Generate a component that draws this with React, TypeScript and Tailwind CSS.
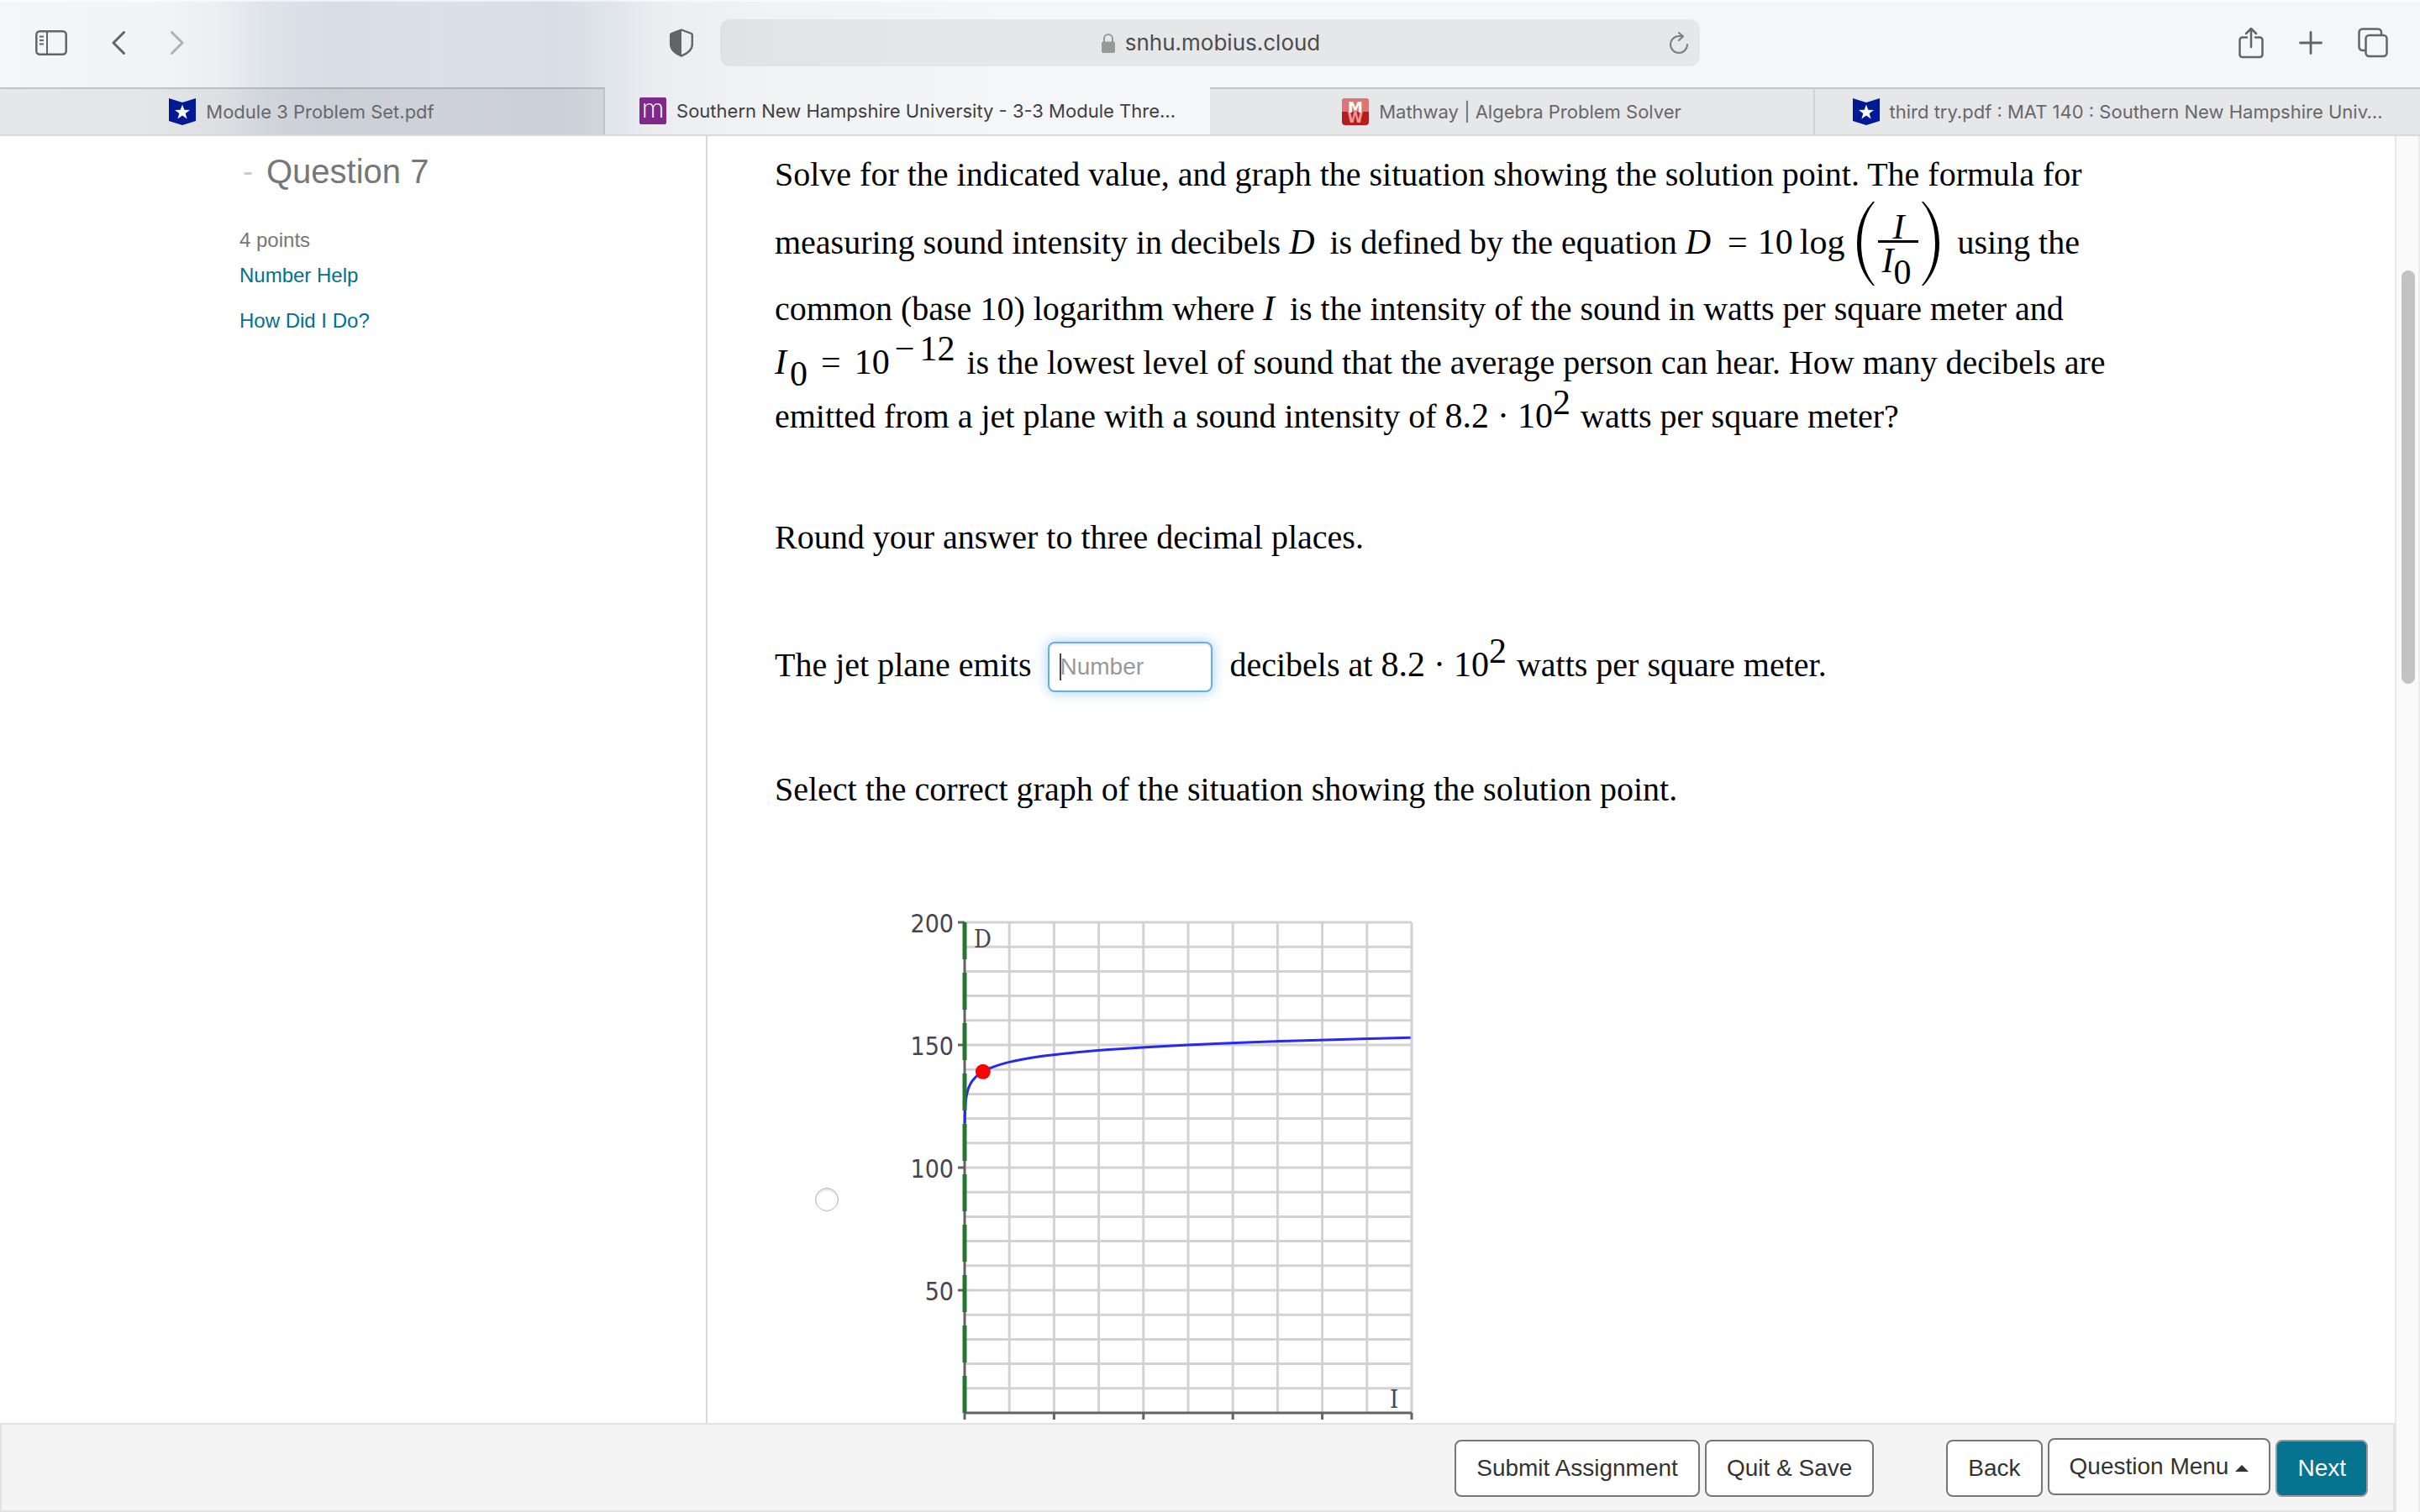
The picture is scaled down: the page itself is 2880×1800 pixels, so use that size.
import type { ReactNode } from "react"

const CHART = { x: 78, y: 18, width: 532, height: 584, cols: 10, rows: 20, maxI: 2000, maxD: 200 }

const tabs = [
  { title: "Module 3 Problem Set.pdf", icon: "star", active: false },
  { title: "Southern New Hampshire University - 3-3 Module Thre…", icon: "mobius", active: true },
  { title: "Mathway | Algebra Problem Solver", icon: "mathway", active: false },
  { title: "third try.pdf : MAT 140 : Southern New Hampshire Univ…", icon: "star", active: false },
]

function Favicon({ name }: { name: string }) {
  if (name === "star") {
    return (
      <svg className="size-8 shrink-0" viewBox="0 0 32 32" aria-hidden="true">
        <path d="M0 0L16 5L32 0V27L16 32L0 27Z" fill="#001a96" />
        <path d="M16 7.5l2.3 6.2 6.7.2-5.300 4.100 1.900 6.400L16 20.600l-5.600 3.800 1.900-6.400L7 13.900l6.700-.2z" fill="#fff" />
      </svg>
    )
  }
  if (name === "mobius") {
    return (
      <svg className="size-8 shrink-0 overflow-visible" viewBox="0 0 32 32" aria-hidden="true">
        <rect width="32" height="32" rx="2" fill="#7f2a8b" />
        <text x="16" y="24" textAnchor="middle" fontFamily="Lato" fontWeight="300" fontSize="33" fill="#fff">m</text>
      </svg>
    )
  }
  return (
    <svg className="size-8 shrink-0 overflow-visible" viewBox="0 0 32 32" aria-hidden="true">
      <rect width="32" height="32" rx="4" fill="#b91a1a" />
      <path d="M4 0H28A4 4 0 0 1 32 4V16H0V4A4 4 0 0 1 4 0Z" fill="#dc7676" />
      <text x="16" y="29" textAnchor="middle" fontFamily="DejaVu Sans" fontWeight="700" fontSize="17" fill="#e99a9a">W</text>
      <text x="16" y="17" textAnchor="middle" fontFamily="DejaVu Sans" fontWeight="700" fontSize="18" fill="#fff">M</text>
    </svg>
  )
}

function Toolbar() {
  return (
    <div className="grid h-[104px] grid-cols-[1fr_1166px_1fr] items-center border-t-2 border-white/60 pb-1">
      <div className="flex items-center pr-8 pl-[42px] text-[#636467]">
        <button aria-label="Show sidebar">
          <svg className="h-[30px] w-[38px]" viewBox="0 0 38 30" fill="none" stroke="currentColor" strokeWidth="2.500">
            <rect x="1.300" y="1.300" width="35.400" height="27.400" rx="4" />
            <path d="M14 1v28M5 7.500h5M5 12h5M5 16.500h5" strokeWidth="2" />
          </svg>
        </button>
        <button aria-label="Back" className="ml-[53px]">
          <svg className="h-7 w-4" viewBox="0 0 16 28" fill="none" stroke="currentColor" strokeWidth="3" strokeLinecap="round" strokeLinejoin="round">
            <path d="M14.500 1.500L2 14l12.500 12.500" />
          </svg>
        </button>
        <button aria-label="Forward" className="ml-[54px] text-[#b0b1b4]">
          <svg className="h-7 w-4" viewBox="0 0 16 28" fill="none" stroke="currentColor" strokeWidth="3" strokeLinecap="round" strokeLinejoin="round">
            <path d="M1.500 1.500L14 14L1.500 26.500" />
          </svg>
        </button>
        <button aria-label="Privacy report" className="ml-auto">
          <svg className="h-[34px] w-7" viewBox="0 0 28 34">
            <path d="M14 1.500L26 6q.8.300.8 1.500V19c0 6-6 11-12.800 13.500C7.200 30 1.200 25 1.200 19V7.500Q1.200 6.300 2 6Z" fill="none" stroke="currentColor" strokeWidth="2.400" />
            <path d="M14 1.500L2 6q-.8.300-.8 1.500V19c0 6 6 11 12.800 13.500Z" fill="currentColor" />
          </svg>
        </button>
      </div>

      <div className="flex h-14 items-center rounded-xl bg-black/6 px-3.5">
        <div className="flex flex-1 items-center justify-center gap-3 pl-6">
          <svg className="h-[23px] w-4" viewBox="0 0 16 23" fill="#979898" aria-hidden="true">
            <rect y="9.500" width="16" height="13.500" rx="2" />
            <path d="M3 10V6a5 5 0 0 1 10 0v4" fill="none" stroke="#979898" strokeWidth="2" />
          </svg>
          <span className="text-[26px] leading-8 text-[#4b4c4e]">snhu.mobius.cloud</span>
        </div>
        <button aria-label="Reload" className="text-[#7b7c7e]">
          <svg className="h-[26px] w-[22px]" viewBox="0 0 22 26" fill="none" stroke="currentColor" strokeWidth="2" strokeLinecap="round" strokeLinejoin="round">
            <path d="M21 15a10 10 0 1 1-10-10h4M11 1l5 4.200L11 10" />
          </svg>
        </button>
      </div>

      <div className="flex items-center justify-end gap-[42px] pr-[38px] text-[#636467]">
        <button aria-label="Share">
          <svg className="h-[38px] w-[30px]" viewBox="0 0 30 38" fill="none" stroke="currentColor" strokeWidth="2.500" strokeLinecap="round" strokeLinejoin="round">
            <path d="M10 12.500H4.500A3 3 0 0 0 1.500 15.500V33a3 3 0 0 0 3 3h21a3 3 0 0 0 3-3V15.500a3 3 0 0 0-3-3H20M15 24V2M9 8l6-6 6 6" />
          </svg>
        </button>
        <button aria-label="New tab">
          <svg className="size-7" viewBox="0 0 28 28" stroke="currentColor" strokeWidth="2.800" strokeLinecap="round">
            <path d="M14 1.500v25M1.500 14h25" />
          </svg>
        </button>
        <button aria-label="Show all tabs">
          <svg className="size-9" viewBox="0 0 36 36" fill="none" stroke="currentColor" strokeWidth="2.500">
            <rect x="9.500" y="9" width="25" height="25" rx="4" />
            <path d="M9 27H5.500a4 4 0 0 1-4-4V5.500a4 4 0 0 1 4-4H24a4 4 0 0 1 4 4V9" />
          </svg>
        </button>
      </div>
    </div>
  )
}

function TabBar() {
  return (
    <nav className="grid h-[58px] grid-cols-4 border-b-2 border-[#d8d9da]">
      {tabs.map((tab) => (
        <a
          key={tab.title}
          href="#"
          className={
            tab.active
              ? "flex items-center justify-center gap-3 text-[22px] text-[#3f4042]"
              : "flex items-center justify-center gap-3 border-t-2 border-r-2 border-t-black/15 border-r-black/8 bg-black/6 text-[22px] text-[#67686b] last:border-r-0"
          }
        >
          <Favicon name={tab.icon} />
          <span className="whitespace-nowrap">{tab.title}</span>
        </a>
      ))}
    </nav>
  )
}

function Var({ children }: { children: ReactNode }) {
  return <i className="mr-2 text-[42px] leading-none">{children}</i>
}

function Sup({ children }: { children: ReactNode }) {
  return <span className="relative -top-4 text-[42px] leading-none">{children}</span>
}

function Sub({ children }: { children: ReactNode }) {
  return <span className="relative top-3.5 text-[42px] leading-none">{children}</span>
}

function Intensity() {
  return (
    <span className="mr-0.5 text-[42px] leading-none whitespace-nowrap">
      8.2<span className="mx-2.5">·</span>10<Sup>2</Sup>
    </span>
  )
}

function Fraction() {
  return (
    <span className="mr-2 ml-3 inline-flex h-24 items-center gap-1 pt-1 align-[-38px] text-[42px] leading-none">
      <svg className="h-[100px] w-6 shrink-0" viewBox="0 0 24 100" aria-hidden="true">
        <path d="M22 0Q3 20 3 50T22 100L24 100Q8 80 8 50T24 0Z" />
      </svg>
      <span className="flex flex-col items-center pb-1">
        <i className="h-[41px] leading-[50px]">I</i>
        <span className="w-12 border-t-3 border-black pl-1 leading-10">
          <i>I</i>
          <Sub>0</Sub>
        </span>
      </span>
      <svg className="h-[100px] w-6 shrink-0" viewBox="0 0 24 100" aria-hidden="true">
        <path d="M2 0Q21 20 21 50T2 100L0 100Q16 80 16 50T0 0Z" />
      </svg>
    </span>
  )
}

function Chart() {
  const { x, y, width, height, cols, rows, maxI, maxD } = CHART
  const px = (i: number) => x + (i / maxI) * width
  const py = (d: number) => y + ((maxD - d) / maxD) * height

  // D = 10 log(I / 10^-12), stepped evenly in D so the steep part stays smooth
  const points: string[] = []
  for (let d = 118; d <= 153; d += 0.5) {
    points.push(`${px(Math.pow(10, (d - 120) / 10)).toFixed(1)},${py(d).toFixed(1)}`)
  }

  return (
    <svg className="h-[696px] w-[630px]" viewBox="0 0 630 696" role="img" aria-label="Graph of D against I">
      <g stroke="#d2d2d2" strokeWidth="3">
        {Array.from({ length: cols }, (_, i) => (
          <line key={i} x1={x + ((i + 1) * width) / cols} x2={x + ((i + 1) * width) / cols} y1={y} y2={y + height} />
        ))}
        {Array.from({ length: rows }, (_, i) => (
          <line key={i} x1={x} x2={x + width} y1={y + (i * height) / rows} y2={y + (i * height) / rows} />
        ))}
      </g>
      <g stroke="#636363" strokeWidth="3">
        <line x1={x} x2={x} y1={y} y2={y + height + 8} />
        <line x1={x} x2={x + width} y1={y + height} y2={y + height} />
        {[400, 800, 1200, 1600, 2000].map((i) => (
          <line key={i} x1={px(i)} x2={px(i)} y1={y + height} y2={y + height + 8} />
        ))}
        {[50, 100, 150, 200].map((d) => (
          <line key={d} x1={x - 8} x2={x} y1={py(d)} y2={py(d)} />
        ))}
      </g>
      <polyline points={points.join(" ")} fill="none" stroke="#2828f4" strokeWidth="3" />
      <line x1={x} x2={x} y1={y} y2={y + height} stroke="#23752f" strokeWidth="5" strokeDasharray="44 16" />
      <circle cx={px(82)} cy={py(139.1)} r="9" fill="#ff0000" />
      <g fill="#4a4350" fontSize="30" fontFamily="'DejaVu Sans Condensed', 'DejaVu Sans', sans-serif">
        {[50, 100, 150, 200].map((d) => (
          <text key={d} x={x - 13} y={py(d) + 12} textAnchor="end">
            {d}
          </text>
        ))}
      </g>
      <g fill="#4a4350" fontSize="29" fontFamily="'DejaVu Serif Condensed', 'DejaVu Serif', serif">
        <text x={x + 11} y={y + 30}>D</text>
        <text x={x + width - 26} y={y + height - 6}>I</text>
      </g>
    </svg>
  )
}

function Question() {
  return (
    <section className="flex min-w-0 flex-1 flex-col gap-20 pt-3.5 pl-20 font-['Liberation_Serif',serif] text-[40px] leading-[64px] text-black">
      <p className="max-w-[1600px] shrink-0">
        Solve for the indicated value, and graph the situation showing the solution point. The formula for measuring
        sound intensity in decibels <Var>D</Var> is defined by the equation{" "}
        <span className="whitespace-nowrap">
          <Var>D</Var>
          <span className="mx-3 text-[42px] leading-none">=</span>
          <span className="text-[42px] leading-none">10</span>
          <span className="ml-2 text-[42px] leading-none">log</span>
          <Fraction />
        </span>{" "}
        using the common (base 10) logarithm where <Var>I</Var> is the intensity of the sound in watts per square meter
        and{" "}
        <span className="mr-1 text-[42px] leading-none whitespace-nowrap">
          <i className="mr-1">I</i>
          <Sub>0</Sub>
          <span className="mx-4">=</span>10
          <Sup>
            <span className="mx-1.5">−</span>12
          </Sup>
        </span>{" "}
        is the lowest level of sound that the average person can hear. How many decibels are emitted from a jet plane
        with a sound intensity of <Intensity /> watts per square meter?
      </p>

      <p className="shrink-0">Round your answer to three decimal places.</p>

      <div className="flex h-[76px] shrink-0 items-end pb-1">
        <label htmlFor="answer">The jet plane emits</label>
        <span className="relative mx-5 flex">
          <input
            id="answer"
            type="text"
            placeholder="Number"
            className="h-[60px] w-[196px] rounded-lg border-2 border-[#66afe9] px-3 font-['Liberation_Sans',sans-serif] text-[28px] shadow-[inset_0_2px_2px_rgba(0,0,0,0.075),0_0_16px_rgba(102,175,233,0.6)] outline-none placeholder:text-[#999]"
          />
          <span className="absolute top-3.5 left-3.5 h-8 w-0.5 bg-[#444]" />
        </span>
        <span className="whitespace-nowrap">
          decibels at <Intensity /> watts per square meter.
        </span>
      </div>

      <p className="shrink-0">Select the correct graph of the situation showing the solution point.</p>

      <label className="mt-7 flex shrink-0 items-center gap-[72px] pl-12">
        <input
          type="radio"
          name="graph"
          className="size-7 appearance-none rounded-full border border-[#b4b4b4] bg-white shadow-[inset_0_2px_3px_rgba(0,0,0,0.12)]"
        />
        <Chart />
      </label>
    </section>
  )
}

const buttonClass = "h-[68px] rounded-lg border-2 border-[#767676] bg-white px-6 text-[28px] text-[#333]"

export default function App() {
  return (
    <div className="flex h-screen flex-col overflow-hidden bg-white font-['Inter',sans-serif]">
      <header className="bg-[linear-gradient(90deg,#f5f6f8_0px,#f3f4f6_180px,#eceef1_260px,#dee2e9_320px,#d8dce5_400px,#dce0e8_520px,#d8dde6_660px,#dfe3ea_720px,#ebedf0_780px,#f1f2f4_900px,#f5f6f8_1200px)]">
        <Toolbar />
        <TabBar />
      </header>

      <div className="flex min-h-0 flex-1 font-['Liberation_Sans',sans-serif]">
        <div className="flex min-w-0 flex-1 flex-col">
          <main className="flex min-h-0 flex-1 overflow-hidden">
            <aside className="w-[842px] shrink-0 border-r-2 border-[#d9d9d9] pt-[18px] pl-[285px] text-2xl leading-8 text-[#777]">
              <div className="flex h-12 items-center">
                <button aria-label="Collapse" className="w-8 pl-1 text-left text-[36px] leading-none text-[#ccc]">
                  -
                </button>
                <h1 className="text-[40px] leading-[48px]">Question 7</h1>
              </div>
              <p className="mt-[42px]">4 points</p>
              <a href="#" className="mt-2.5 block text-[#00718f]">
                Number Help
              </a>
              <a href="#" className="mt-[22px] block text-[#00718f]">
                How Did I Do?
              </a>
            </aside>
            <Question />
          </main>

          <footer className="flex h-[106px] items-start justify-end gap-1.5 border-2 border-[#e2e2e2] bg-[#f4f4f4] pt-[18px] pr-[30px]">
            <button className={buttonClass}>Submit Assignment</button>
            <button className={buttonClass}>Quit &amp; Save</button>
            <button className={`${buttonClass} ml-20`}>Back</button>
            <button className={`${buttonClass} -mt-0.5 flex items-center gap-2`}>
              Question Menu
              <svg className="mt-1 h-2 w-4" viewBox="0 0 16 8" fill="#333" aria-hidden="true">
                <path d="M0 8L8 0L16 8Z" />
              </svg>
            </button>
            <button className="h-[68px] rounded-lg border-2 border-[#999] bg-[#067391] px-6 text-[28px] text-white">Next</button>
          </footer>
        </div>

        {/* Scrollbar */}
        <div className="w-[30px] border-r-2 border-l-2 border-r-[#ececec] border-l-[#e8e8e8] bg-[#fafafa] pt-40">
          <div className="ml-1.5 h-[492px] w-4 rounded-full bg-[#c2c2c2]" />
        </div>
      </div>
    </div>
  )
}
